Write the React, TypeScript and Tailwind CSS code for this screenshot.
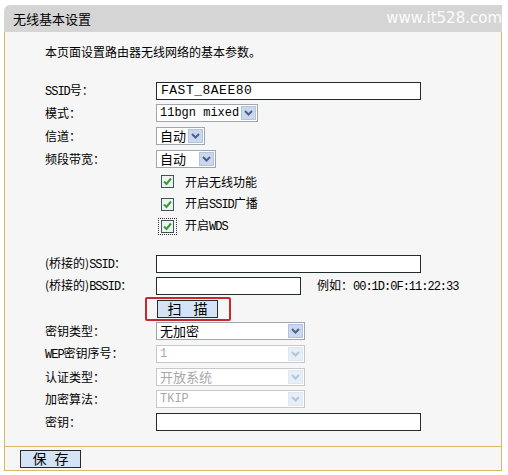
const cjk = '"Noto Sans CJK SC", "Liberation Sans", sans-serif'
const mono = '"Liberation Mono", "Noto Sans CJK SC", monospace'

function Chevron({ disabled }: { disabled?: boolean }) {
  return (
    <div
      className={
        'm-px flex w-[15px] shrink-0 items-center justify-center border ' +
        (disabled ? 'border-[#dfe7f2] bg-[#e6eef8]' : 'border-[#b5c4dc] bg-[#c9d8ef]')
      }
    >
      <svg width="9" height="6" viewBox="0 0 9 6">
        <polyline
          points="1,1 4.5,4.5 8,1"
          fill="none"
          stroke={disabled ? '#b8c4d8' : '#4d6185'}
          strokeWidth="2"
        />
      </svg>
    </div>
  )
}

function Select({ value, width, disabled, latin }: { value: string; width: string; disabled?: boolean; latin?: boolean }) {
  return (
    <div
      className={
        'flex h-[18px] items-center border bg-white ' +
        width +
        (disabled ? ' border-[#c8c8c8] text-[#a8a8a8]' : ' border-[#9ea6ae] text-black')
      }
    >
      <span
        className={'flex-1 whitespace-nowrap pl-[3px] leading-[16px] ' + (latin ? 'text-[12px]' : 'text-[13px]')}
        style={{ fontFamily: latin ? mono : cjk }}
      >
        {value}
      </span>
      <div className="flex h-full">
        <Chevron disabled={disabled} />
      </div>
    </div>
  )
}

function Input({ value, width }: { value?: string; width: string }) {
  return (
    <div
      className={'h-[18px] border border-[#1f2d2d] bg-white pl-[4px] text-[13px] leading-[16px] tracking-[0.5px] ' + width}
      style={{ fontFamily: mono }}
    >
      {value}
    </div>
  )
}

function Check({ focus }: { focus?: boolean }) {
  return (
    <div className={'flex h-[17px] w-[19px] items-center justify-center ' + (focus ? 'border border-dotted border-[#333]' : '')}>
      <svg width="13" height="13" viewBox="0 0 13 13">
        <rect x="0.5" y="0.5" width="12" height="12" fill="#eef3ee" stroke="#3b5561" />
        <polyline points="3,6.5 5.5,9 10,3.5" fill="none" stroke="#3c9a3c" strokeWidth="2" />
      </svg>
    </div>
  )
}

function Button({ a, b, gap }: { a: string; b: string; gap: string }) {
  return (
    <div
      className={'flex h-[18px] w-[61px] items-center justify-center border border-[#2a2a2a] bg-[#d4e3f6] text-[14px] ' + gap}
      style={{ fontFamily: cjk }}
    >
      <span>{a}</span>
      <span>{b}</span>
    </div>
  )
}

function Row({ label, h, children }: { label?: React.ReactNode; h: string; children?: React.ReactNode }) {
  return (
    <div className={'flex items-center ' + h}>
      <div className="w-[111px] shrink-0 whitespace-nowrap text-[12px]" style={{ fontFamily: cjk }}>
        {label}
      </div>
      {children}
    </div>
  )
}

function L({ children }: { children: React.ReactNode }) {
  return (
    <span className="text-[12px] tracking-[-1px]" style={{ fontFamily: mono }}>
      {children}
    </span>
  )
}

export default function App() {
  return (
    <div className="h-[475px] w-[508px] bg-white pt-[5px] pl-[4px] text-black">
      <div className="w-[498px]">
        <div className="flex h-[27px] items-center justify-between rounded-tl-[6px] bg-[#d5d5d5] pl-[9px]">
          <span className="text-[13px]" style={{ fontFamily: cjk }}>
            无线基本设置
          </span>
          <span className="text-[15px] text-white/90" style={{ fontFamily: '"DejaVu Sans", sans-serif' }}>
            www.it528.com
          </span>
        </div>

        <div className="h-[415px] border-x border-b border-[#dcb864] bg-[#f6f6f6] pl-[40px] pt-[9px]">
          <div className="flex h-[21px] items-center text-[12px]" style={{ fontFamily: cjk }}>
            本页面设置路由器无线网络的基本参数。
          </div>
          <div className="h-[18px]" />
          <Row label={<><L>SSID</L>号：</>} h="h-[22px]">
            <Input value="FAST_8AEE80" width="w-[265px]" />
          </Row>
          <Row label="模式：" h="h-[22px]">
            <Select value="11bgn mixed" width="w-[102px]" latin />
          </Row>
          <Row label="信道：" h="h-[23px]">
            <Select value="自动" width="w-[49px]" />
          </Row>
          <Row label="频段带宽：" h="h-[23px]">
            <Select value="自动" width="w-[60px]" />
          </Row>
          <Row h="h-[23px]">
            <div className="flex items-center pl-[2px]">
              <Check />
              <span className="ml-[8px] text-[12px]" style={{ fontFamily: cjk }}>开启无线功能</span>
            </div>
          </Row>
          <Row h="h-[22px]">
            <div className="flex items-center pl-[2px]">
              <Check />
              <span className="ml-[8px] text-[12px]" style={{ fontFamily: cjk }}>
                开启<L>SSID</L>广播
              </span>
            </div>
          </Row>
          <Row h="h-[22px]">
            <div className="flex items-center pl-[2px]">
              <Check focus />
              <span className="ml-[8px] text-[12px]" style={{ fontFamily: cjk }}>
                开启<L>WDS</L>
              </span>
            </div>
          </Row>
          <div className="h-[16px]" />
          <Row label={<>(桥接的)<L>SSID</L>：</>} h="h-[22px]">
            <Input width="w-[265px]" />
          </Row>
          <Row label={<>(桥接的)<L>BSSID</L>：</>} h="h-[22px]">
            <Input width="w-[145px]" />
            <span className="ml-[16px] text-[12px]" style={{ fontFamily: cjk }}>
              例如：<L>00:1D:0F:11:22:33</L>
            </span>
          </Row>
          <div className="ml-[100px] flex h-[23px] items-center">
            <div className="flex h-[24px] w-[86px] items-center rounded-[2px] border-2 border-[#c8282c] pl-[10px]">
              <Button a="扫" b="描" gap="gap-[12px]" />
            </div>
          </div>
          <Row label="密钥类型：" h="h-[22px]">
            <Select value="无加密" width="w-[149px]" />
          </Row>
          <Row label={<><L>WEP</L>密钥序号：</>} h="h-[23px]">
            <Select value="1" width="w-[149px]" disabled latin />
          </Row>
          <Row label="认证类型：" h="h-[23px]">
            <Select value="开放系统" width="w-[149px]" disabled />
          </Row>
          <Row label="加密算法：" h="h-[22px]">
            <Select value="TKIP" width="w-[149px]" disabled latin />
          </Row>
          <Row label="密钥：" h="h-[24px]">
            <Input width="w-[265px]" />
          </Row>
        </div>

        <div className="flex h-[24px] items-center border-x border-b border-[#dcb864] bg-[#f6f6f6] pl-[15px]">
          <Button a="保" b="存" gap="gap-[8px]" />
        </div>
      </div>
    </div>
  )
}
